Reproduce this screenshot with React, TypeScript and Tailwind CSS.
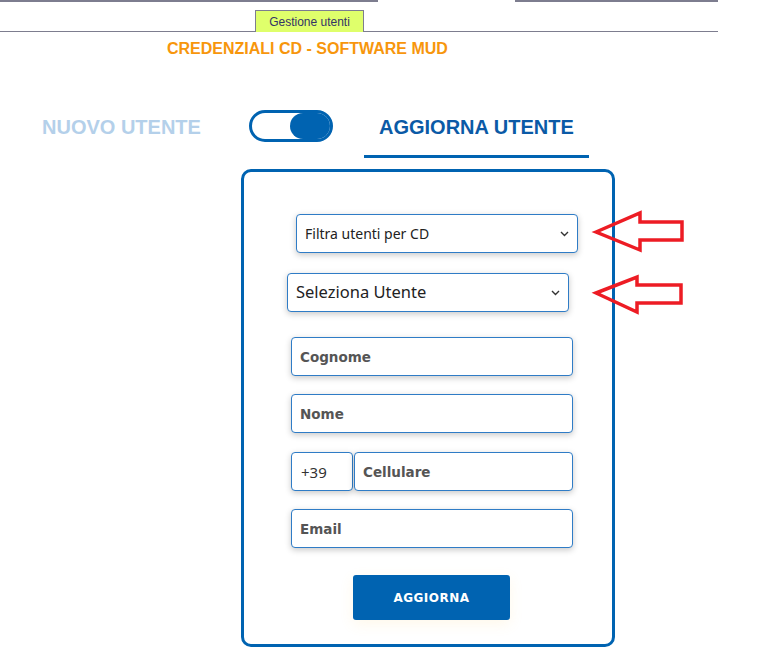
import { useState } from 'react'

const arial = "font-['Liberation_Sans',Arial,sans-serif]"
const inputCls =
  "h-[39px] w-[282px] rounded-[4px] border border-[#2f7cc6] bg-white pl-2 text-[13.5px] font-['DejaVu_Sans',Verdana,sans-serif] text-[#333] shadow-[0_2px_6px_rgba(0,0,0,0.22)] outline-none placeholder:font-bold placeholder:text-[#555]"

function Chevron() {
  return (
    <svg width="9" height="6" viewBox="0 0 9 6" className="pointer-events-none absolute top-1/2 right-[9px] -translate-y-1/2">
      <path d="M1 1l3.5 3.5L8 1" fill="none" stroke="#333" strokeWidth="1.4" />
    </svg>
  )
}

function SelectBox({ label, size, className }: { label: string; size: string; className: string }) {
  return (
    <div className={`relative w-[282px] ${className}`}>
      <select
        className={`h-[39px] w-[282px] appearance-none rounded-[4px] border border-[#2f7cc6] bg-white pl-2 font-['Noto_Sans',sans-serif] text-[#222] shadow-[0_2px_6px_rgba(0,0,0,0.22)] outline-none ${size}`}
        defaultValue=""
      >
        <option value="">{label}</option>
      </select>
      <Chevron />
    </div>
  )
}

export default function App() {
  const [update, setUpdate] = useState(true)

  return (
    <div className="relative min-h-[649px] w-[783px] bg-white">
      {/* Header tabs */}
      <div className="w-[718px]">
        <div className="flex h-[2px]">
          <div className="w-[378px] bg-[#7d7d8f]" />
          <div className="w-[137px]" />
          <div className="flex-1 bg-[#7d7d8f]" />
        </div>
        <div className="flex h-[30px] items-end border-b border-[#7d7d8f]">
          <div
            className={`-mb-px ml-[255px] flex h-[22px] w-[109px] items-center justify-center border border-b-0 border-[#7d7d8f] bg-[#dfff6b] text-[12px] text-[#333366] ${arial}`}
          >
            Gestione utenti
          </div>
        </div>
      </div>

      {/* Title */}
      <div className={`mt-[8px] ml-[167px] text-[16px] leading-[18px] font-bold text-[#f7960c] ${arial}`}>
        CREDENZIALI CD - SOFTWARE MUD
      </div>

      {/* Toggle row */}
      <div className={`mt-[51px] flex items-start ${arial}`}>
        <div
          className={`mt-[6px] ml-[42px] text-[20px] leading-[24px] font-bold ${update ? 'text-[#b4d0ea]' : 'text-[#0b5aa6]'}`}
        >
          NUOVO UTENTE
        </div>
        <button
          onClick={() => setUpdate(!update)}
          className={`mt-px ml-[48px] flex h-[32px] w-[84px] rounded-full border-[3px] border-[#0063b1] ${update ? 'justify-end' : 'justify-start'}`}
        >
          <div className="h-full w-[40px] rounded-full bg-[#0063b1]" />
        </button>
        <div className="ml-[31px] w-[225px] border-b-[3px] border-[#0063b1] pt-[6px] pb-[14px] text-center">
          <span className={`text-[20px] leading-[24px] font-bold ${update ? 'text-[#0b5aa6]' : 'text-[#b4d0ea]'}`}>
            AGGIORNA UTENTE
          </span>
        </div>
      </div>

      {/* Card */}
      <div className="mt-[11px] ml-[241px] flex h-[478px] w-[374px] flex-col rounded-[10px] border-[3px] border-[#0063b1]">
        <SelectBox label="Filtra utenti per CD" size="text-[14px]" className="mt-[42px] ml-[52px]" />
        <SelectBox label="Seleziona Utente" size="text-[16.5px]" className="mt-[20px] ml-[43px]" />
        <input className={`mt-[25px] ml-[47px] ${inputCls}`} placeholder="Cognome" />
        <input className={`mt-[18px] ml-[47px] ${inputCls}`} placeholder="Nome" />
        <div className="mt-[19px] ml-[47px] flex w-[282px] gap-px">
          <input
            className="h-[39px] w-[62px] rounded-[4px] border border-[#2f7cc6] bg-white pl-[9px] font-['Noto_Sans',sans-serif] text-[15px] text-[#333] shadow-[0_2px_6px_rgba(0,0,0,0.22)] outline-none"
            defaultValue="+39"
          />
          <input className={`${inputCls} w-auto flex-1`} placeholder="Cellulare" />
        </div>
        <input className={`mt-[18px] ml-[47px] ${inputCls}`} placeholder="Email" />
        <button className="mt-[27px] ml-[109px] h-[45px] w-[157px] rounded-[3px] bg-[#0063b1] font-['DejaVu_Sans',Verdana,sans-serif] text-[12px] font-bold tracking-[0.5px] text-white shadow-[0_4px_14px_rgba(255,200,80,0.12)]">
          AGGIORNA
        </button>
      </div>

      {/* Red annotation arrows */}
      <svg
        width="100"
        height="112"
        viewBox="0 0 100 112"
        className="pointer-events-none absolute top-[205px] left-[590px]"
      >
        <polygon
          points="6,27 50,8 50,17 92,17 92,35 50,35 50,45"
          fill="none"
          stroke="#ed1c24"
          strokeWidth="3.5"
          strokeLinejoin="miter"
        />
        <polygon
          points="6,88 47,72 47,80 91,80 91,98 47,98 47,107"
          fill="none"
          stroke="#ed1c24"
          strokeWidth="3.5"
          strokeLinejoin="miter"
        />
      </svg>
    </div>
  )
}
